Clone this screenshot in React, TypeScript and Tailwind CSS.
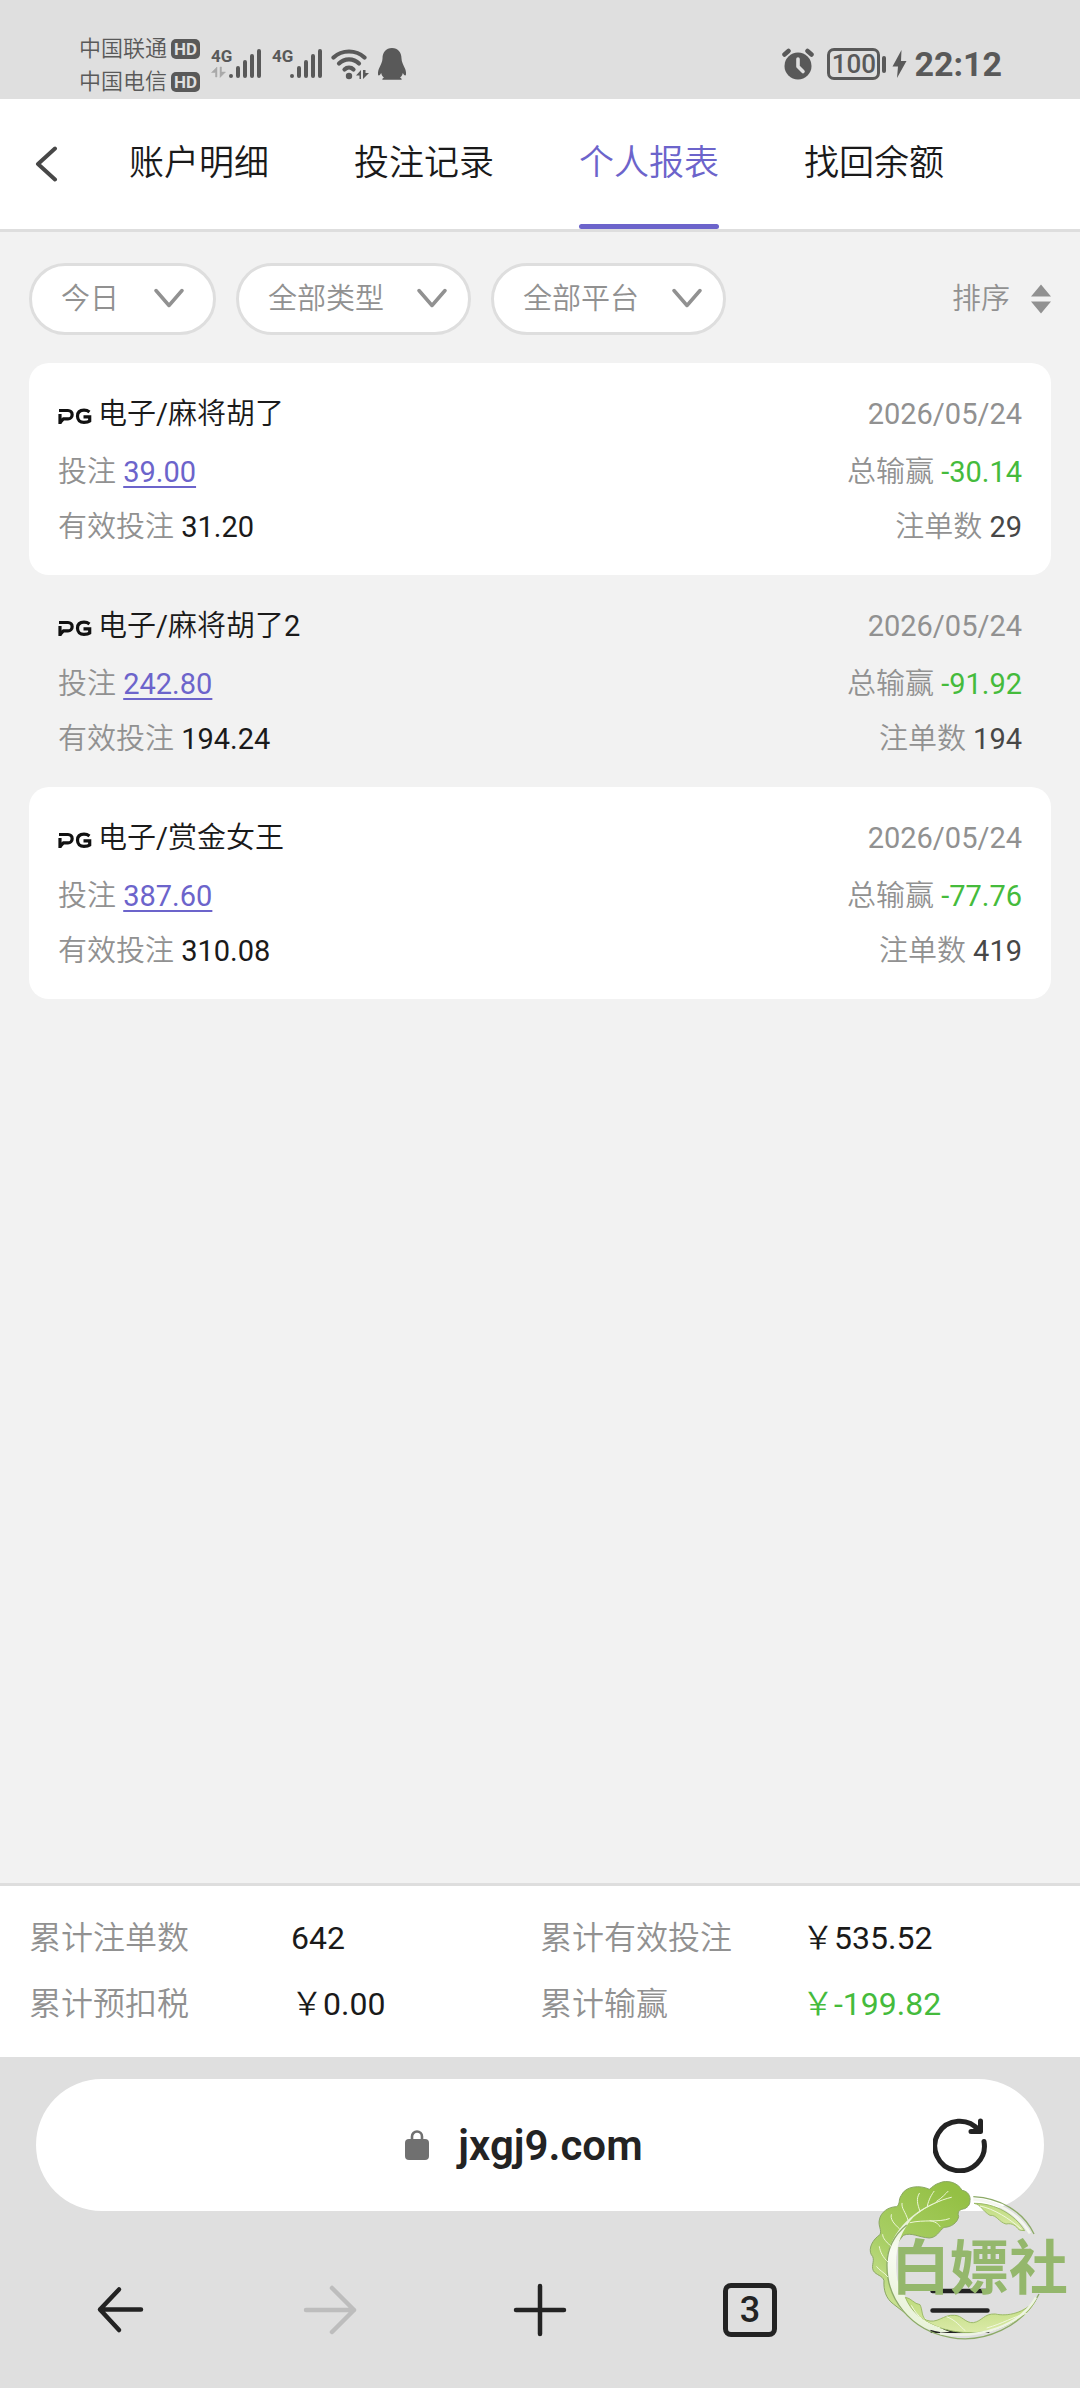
import React from 'react';

const tabs = ['账户明细', '投注记录', '个人报表', '找回余额'];

const filters = [
  { label: '日期', value: '今日', width: 'w-[187px]', chevron: 'right-8' },
  { label: '类型', value: '全部类型', width: 'w-[235px]', chevron: 'right-6' },
  { label: '平台', value: '全部平台', width: 'w-[235px]', chevron: 'right-6' },
];

const records = [
  { game: '电子/麻将胡了', bet: '39.00', valid: '31.20', date: '2026/05/24', result: '-30.14', count: '29' },
  { game: '电子/麻将胡了2', bet: '242.80', valid: '194.24', date: '2026/05/24', result: '-91.92', count: '194' },
  { game: '电子/赏金女王', bet: '387.60', valid: '310.08', date: '2026/05/24', result: '-77.76', count: '419' },
];

const totals = [
  { label: '累计注单数', value: '642', color: 'text-[#1a1a1a]' },
  { label: '累计有效投注', value: '\uFFE5535.52', color: 'text-[#1a1a1a]' },
  { label: '累计预扣税', value: '\uFFE50.00', color: 'text-[#1a1a1a]' },
  { label: '累计输赢', value: '\uFFE5-199.82', color: 'text-[#45bb3c]' },
];

function Signal({ arrows }: { arrows?: boolean }) {
  return (
    <div className="relative h-8 w-[50px]">
      <span className="absolute left-0 top-0 text-[17px] font-bold leading-4">4G</span>
      <svg className="h-8 w-[50px]" viewBox="0 0 50 32" fill="none" aria-hidden="true">
        {arrows && (
          <path d="M0.500 24.500L6 19V29H4.500V24.500ZM9 19V29.500L14.500 24H10.500V19Z" fill="#a9a9a9" stroke="#a9a9a9" strokeWidth="0.500" />
        )}
        <path d="M20 28v.1M27 28v-8M34 28V14M41 28V8M48 28V3" stroke="#595959" strokeWidth="4" strokeLinecap="round" />
      </svg>
    </div>
  );
}

function Carrier({ name }: { name: string }) {
  return (
    <div className="flex items-center gap-1">
      <span className="text-[22px] leading-[33px]">{name}</span>
      <span className="flex h-5 w-[29px] items-center justify-center rounded-[5px] bg-[#595959] text-[17px] font-bold leading-5 text-[#dfdfdf]">
        HD
      </span>
    </div>
  );
}

function StatusBar() {
  return (
    <div className="flex h-[99px] items-start justify-between bg-[#dfdfdf] pl-[79px] pr-[78px] pt-8 text-[#595959]">
      <div className="flex">
        <div className="w-[132px]">
          <Carrier name="中国联通" />
          <Carrier name="中国电信" />
        </div>
        <div className="flex gap-[11px] pt-4">
          <Signal arrows />
          <Signal />
          <svg className="-ml-0.5 h-8 w-[38px]" viewBox="0 0 38 32" fill="none" aria-label="WLAN">
            <g stroke="#595959" strokeWidth="4.2" strokeLinecap="round">
              <path d="M2.500 9.500C11 1.500 25 1.500 33.500 9.500" />
              <path d="M8 15.500C13.500 10 22.500 10 28 15.500" />
              <path d="M13.500 21.500C16 19 20 19 22.500 21.500" />
            </g>
            <circle cx="18" cy="28" r="3.200" fill="#595959" />
            <path d="M25 27.500l5-5.500v9h-1.500v-3.500zM32 22v9l6-6h-3.500v-3z" fill="#595959" />
          </svg>
          <svg className="-ml-0.5 h-8 w-7" viewBox="0 0 28 32" fill="#595959" aria-label="QQ">
            <path d="M14 0C8 0 4.500 4.500 4.500 10.500C4.500 14 2.500 17 .8 21C-.5 25-.2 27.500.8 27.500C1.600 27.500 2.600 26 3.200 25C3.600 27 4.600 28.600 6 29.800C4.500 30.300 4 31 4.500 31.800H23.500C24 31 23.500 30.300 22 29.800C23.400 28.600 24.400 27 24.800 25C25.400 26 26.400 27.500 27.200 27.500C28.200 27.500 28.500 25 27.200 21C25.500 17 23.500 14 23.500 10.500C23.500 4.500 20 0 14 0Z" />
          </svg>
        </div>
      </div>
      <div className="flex items-center pt-4">
        <svg className="h-8 w-8" viewBox="0 0 32 32" aria-label="闹钟">
          <circle cx="16" cy="18" r="13.500" fill="#595959" />
          <path d="M2.500 6.500L6.500 3M29.500 6.500L25.500 3" stroke="#595959" strokeWidth="4.500" strokeLinecap="round" />
          <path d="M16 11v7.500l5 5" stroke="#dfdfdf" strokeWidth="3.600" strokeLinecap="round" strokeLinejoin="round" fill="none" />
        </svg>
        <span className="ml-[13px] flex h-8 w-[53px] items-center justify-center rounded-[7px] border-[3px] border-[#595959] text-[26px] font-medium leading-6">
          100
        </span>
        <span className="ml-0.5 h-[17px] w-1 rounded-sm bg-[#595959]" />
        <svg className="ml-1.5 h-8 w-[15px]" viewBox="0 0 15 32" fill="#595959" aria-label="充电中">
          <path d="M9.500 2L.5 18.500H6L5 30L14.500 13H9Z" />
        </svg>
        <span className="ml-[7px] text-[34px] font-bold leading-8">22:12</span>
      </div>
    </div>
  );
}

function Header() {
  return (
    <header className="flex h-[133px] items-stretch border-b-[3px] border-[#dedede] bg-white">
      <button type="button" aria-label="返回" className="w-[129px] pl-[35px]">
        <svg className="h-9 w-6" viewBox="0 0 24 36" fill="none" stroke="#474747" strokeWidth="4" strokeLinecap="round" strokeLinejoin="round">
          <path d="M20 2.500L3 18L20 33.500" />
        </svg>
      </button>
      <nav className="flex gap-[85px]">
        {tabs.map((tab) =>
          tab === '个人报表' ? (
            <button key={tab} type="button" aria-current="page" className="flex flex-col items-center justify-between pt-10 text-[35px] leading-[50px] text-[#6c64cb]">
              {tab}
              <span className="h-[5px] w-full rounded-full bg-[#6c64cb]" />
            </button>
          ) : (
            <button key={tab} type="button" className="flex flex-col items-center pt-10 text-[35px] leading-[50px] text-[#1a1a1a]">
              {tab}
            </button>
          ),
        )}
      </nav>
    </header>
  );
}

function Filters() {
  return (
    <div className="flex items-center justify-between px-[29px] pt-[31px] text-[29px] text-[#919191]">
      <div className="flex gap-5">
        {filters.map((f) => (
          <label key={f.label} className="relative block">
            <select aria-label={f.label} className={`${f.width} h-[72px] appearance-none rounded-full border-[3px] border-[#dedede] bg-white pl-[29px] pt-0.5 text-[#919191]`}>
              <option>{f.value}</option>
            </select>
            <svg className={`${f.chevron} pointer-events-none absolute top-[25px] h-5 w-[30px]`} viewBox="0 0 30 20" fill="none" stroke="#919191" strokeWidth="3.500" strokeLinecap="round" strokeLinejoin="round">
              <path d="M2 2.500L15 17.500L28 2.500" />
            </svg>
          </label>
        ))}
      </div>
      <button type="button" className="flex items-center gap-[21px]">
        <span className="pt-0.5">排序</span>
        <svg className="h-[30px] w-5" viewBox="0 0 20 30" fill="#919191" aria-hidden="true">
          <path d="M10 0.500L20 12.500H0ZM0 17.500H20L10 29.500Z" />
        </svg>
      </button>
    </div>
  );
}

function PgLogo() {
  return (
    <svg className="mt-1 h-[17px] w-[34px]" viewBox="0 0 34 17" fill="none" stroke="#111" strokeWidth="3.200" aria-label="PG">
      <path d="M2 16V6M1 2.500H10A4 4 0 0 1 10 10.800H5.500L1.800 15" />
      <path d="M31.500 4C29.500 2.500 28 2.200 26 2.200C21.500 2.200 19.500 4.800 19.500 8.300C19.500 12 22 14.400 26 14.400C28.500 14.400 30.500 14 31.700 13V8.800H25.500" />
    </svg>
  );
}

function Record({ record }: { record: (typeof records)[number] }) {
  return (
    <article className="flex justify-between rounded-[20px] px-[29px] pb-5 pt-6 text-[29px] leading-[55px] text-[#919191] odd:bg-white">
      <div>
        <h2 className="mb-[3px] flex items-center gap-[6px] text-[#1a1a1a]">
          <PgLogo />
          {record.game}
        </h2>
        <p>
          投注{' '}
          <a href="#bet" className="text-[#6c64cb] underline decoration-2 underline-offset-4">
            {record.bet}
          </a>
        </p>
        <p>
          有效投注 <span className="text-[#1a1a1a]">{record.valid}</span>
        </p>
      </div>
      <div className="text-right">
        <p className="mb-[3px]">{record.date}</p>
        <p>
          总输赢 <span className="text-[#45bb3c]">{record.result}</span>
        </p>
        <p>
          注单数 <span className="text-[#474747]">{record.count}</span>
        </p>
      </div>
    </article>
  );
}

function Totals() {
  return (
    <dl className="grid grid-cols-2 gap-y-4 border-t-[3px] border-[#dedede] bg-white px-[29px] pb-7 pt-[27px] text-[32px] leading-[50px]">
      {totals.map((t) => (
        <div key={t.label} className="flex">
          <dt className="w-[262px] text-[#919191]">{t.label}</dt>
          <dd className={t.color}>{t.value}</dd>
        </div>
      ))}
    </dl>
  );
}

function Watermark() {
  return (
    <div className="pointer-events-none absolute bottom-[18px] right-0 h-[220px] w-[240px]">
      <svg className="h-full w-full" viewBox="0 0 720 660" fill="none" aria-hidden="true">
        <defs>
          <linearGradient id="leaf" x1="0.7" y1="0" x2="0.2" y2="1">
            <stop offset="0" stopColor="#94c044" />
            <stop offset="0.6" stopColor="#a9cf66" />
            <stop offset="1" stopColor="#cfe59a" />
          </linearGradient>
          <linearGradient id="stem" x1="0.6" y1="0" x2="0.3" y2="1">
            <stop offset="0" stopColor="#dcebc2" />
            <stop offset="0.5" stopColor="#f8fbf2" />
            <stop offset="1" stopColor="#e4f0d2" />
          </linearGradient>
          <linearGradient id="frill" x1="0" y1="0" x2="0" y2="1">
            <stop offset="0" stopColor="#bddb7c" />
            <stop offset="1" stopColor="#dbeaa8" />
          </linearGradient>
        </defs>
        <path d="M390 152C392 138 384 124 366 121C354 98 322 88 298 99C284 103 276 112 268 118C240 104 196 108 184 136C174 150 182 160 170 170C146 170 122 186 118 210C114 228 126 240 120 254C98 268 84 296 94 314C108 328 92 346 100 362C108 376 128 376 132 392C130 420 138 446 160 462L196 490L150 380C150 330 160 290 190 256C214 246 236 262 268 264C292 262 296 244 312 232C334 232 352 218 356 200C350 182 362 178 374 176C386 170 390 162 390 152Z" fill="url(#leaf)" stroke="#8ba864" strokeWidth="3" />
        <path d="M310 150C230 172 150 240 141 330C136 430 190 530 300 546L330 546C250 516 190 450 172 390C160 310 176 250 220 202C250 176 280 162 310 150Z" fill="url(#stem)" />
        <path d="M200 225C160 256 142 300 141 340C138 446 210 540 330 562C430 582 550 530 597 432" stroke="#8caa67" strokeWidth="4" />
        <g stroke="#edf6d6" strokeWidth="3" strokeLinecap="round">
          <path d="M232 190C260 168 300 150 334 142M262 168C266 148 276 132 282 124M240 184C232 162 228 146 238 130M290 154C306 144 318 130 324 124M204 210C196 184 184 176 186 160M210 218C252 208 296 218 328 206M270 212C292 216 298 226 300 230M178 236C160 220 150 206 154 194M154 290C140 276 128 266 128 254M144 336C128 322 120 304 118 290M143 380C132 366 118 362 110 350" />
        </g>
        <path d="M402 160C424 164 426 182 450 196C470 194 476 216 498 222C518 218 528 228 538 240L554 242C524 194 468 160 402 160Z" fill="url(#frill)" stroke="#9cba68" strokeWidth="3" />
        <path d="M420 168C460 176 510 206 544 238" stroke="#f1f8de" strokeWidth="3" />
        <path d="M400 140C480 144 550 184 582 252" stroke="#8caa67" strokeWidth="4" />
        <path d="M400 148C470 152 534 190 570 250" stroke="#f4f7ee" strokeWidth="8" />
        <path d="M196 442C214 444 222 462 240 464C248 480 244 500 258 510C292 524 310 492 344 496C366 496 376 520 400 518C426 514 432 490 466 492C502 500 554 490 588 448C562 506 480 546 400 548C330 550 230 526 196 442Z" fill="url(#frill)" stroke="#9cba68" strokeWidth="3" />
        <path d="M214 466C232 500 256 520 300 534M320 500C350 512 360 530 376 542M560 490C516 502 490 520 440 534" stroke="#f1f8de" strokeWidth="3" />
        <path d="M300 550C420 568 540 528 588 442" stroke="#eef4e4" strokeWidth="7" />
      </svg>
      <span className="absolute left-[51px] top-[82px] whitespace-nowrap font-['Noto_Sans_CJK_SC',sans-serif] text-[59px] font-bold leading-[64px] text-[#94b76c]">
        白嫖社
      </span>
    </div>
  );
}

function BrowserBar() {
  return (
    <footer className="relative bg-[#dfdfdf] pt-[22px]">
      <div className="relative mx-9 flex h-[132px] items-center justify-center rounded-full bg-white pr-8">
        <button type="button" className="flex items-center gap-[29px] text-[42px] font-semibold text-[#232323]">
          <svg className="h-[30px] w-6" viewBox="0 0 24 30" aria-hidden="true">
            <rect y="9" width="24" height="21" rx="4" fill="#707070" />
            <path d="M7 11V6.500A5 5 0 0 1 17 6.500V11" fill="none" stroke="#707070" strokeWidth="2.600" />
          </svg>
          jxgj9.com
        </button>
        <button type="button" aria-label="刷新" className="absolute right-[57px]">
          <svg className="h-14 w-[54px]" viewBox="0 0 54 56" fill="none" stroke="#232323" strokeWidth="5" strokeLinecap="round" strokeLinejoin="round">
            <path d="M51 24.500A24.800 24.800 0 1 1 46 13.500M47.500 4V14.500H38" />
          </svg>
        </button>
      </div>
      <nav className="grid h-[177px] grid-cols-5 place-items-center px-[15px] pt-5">
        <button type="button" aria-label="后退">
          <svg className="h-[52px] w-[54px]" viewBox="0 0 54 52" fill="none" stroke="#232323" strokeWidth="4.500" strokeLinecap="round" strokeLinejoin="round">
            <path d="M48 25.500H7M26 5.500L7 25.500L26 46" />
          </svg>
        </button>
        <button type="button" aria-label="前进" disabled>
          <svg className="h-[52px] w-[54px]" viewBox="0 0 54 52" fill="none" stroke="#bdbdbd" strokeWidth="4.500" strokeLinecap="round" strokeLinejoin="round">
            <path d="M3 26H51M29 4L51 26L29 48" />
          </svg>
        </button>
        <button type="button" aria-label="新建标签页">
          <svg className="h-[54px] w-[54px]" viewBox="0 0 54 54" fill="none" stroke="#232323" strokeWidth="4.500" strokeLinecap="round">
            <path d="M3 27H51M27 3V51" />
          </svg>
        </button>
        <button type="button" aria-label="标签页" className="flex h-[54px] w-[54px] items-center justify-center rounded-lg border-[5px] border-[#232323] text-[36px] font-medium leading-none text-[#232323]">
          3
        </button>
        <button type="button" aria-label="菜单">
          <svg className="h-[46px] w-[60px]" viewBox="0 0 60 46" fill="none" stroke="#232323" strokeWidth="4.500" strokeLinecap="round">
            <path d="M2.500 4H57.500M2.500 23.500H57.500M2.500 44H57.500" />
          </svg>
        </button>
      </nav>
      <Watermark />
    </footer>
  );
}

export default function App() {
  return (
    <div className="flex min-h-screen flex-col bg-[#f2f2f2] font-['Roboto','Noto_Sans_CJK_SC_DemiLight','Noto_Sans_CJK_SC',sans-serif]">
      <StatusBar />
      <Header />
      <main className="flex-1">
        <Filters />
        <section className="px-[29px] pt-7">
          {records.map((r) => (
            <Record key={r.game} record={r} />
          ))}
        </section>
      </main>
      <Totals />
      <BrowserBar />
    </div>
  );
}
